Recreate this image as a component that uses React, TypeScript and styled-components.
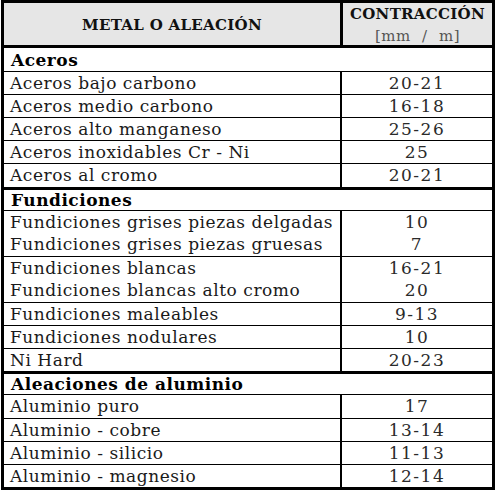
import styled, { createGlobalStyle } from "styled-components";

const LINE = 23.1;

type Item = {
  names: string[];
  values: string[];
};

type Section = {
  title: string;
  items: Item[];
};

const sections: Section[] = [
  {
    title: "Aceros",
    items: [
      { names: ["Aceros bajo carbono"], values: ["20-21"] },
      { names: ["Aceros medio carbono"], values: ["16-18"] },
      { names: ["Aceros alto manganeso"], values: ["25-26"] },
      { names: ["Aceros inoxidables Cr - Ni"], values: ["25"] },
      { names: ["Aceros al cromo"], values: ["20-21"] },
    ],
  },
  {
    title: "Fundiciones",
    items: [
      {
        names: [
          "Fundiciones grises piezas delgadas",
          "Fundiciones grises piezas gruesas",
        ],
        values: ["10", "7"],
      },
      {
        names: ["Fundiciones blancas", "Fundiciones blancas alto cromo"],
        values: ["16-21", "20"],
      },
      { names: ["Fundiciones maleables"], values: ["9-13"] },
      { names: ["Fundiciones nodulares"], values: ["10"] },
      { names: ["Ni Hard"], values: ["20-23"] },
    ],
  },
  {
    title: "Aleaciones de aluminio",
    items: [
      { names: ["Aluminio puro"], values: ["17"] },
      { names: ["Aluminio - cobre"], values: ["13-14"] },
      { names: ["Aluminio - silicio"], values: ["11-13"] },
      { names: ["Aluminio - magnesio"], values: ["12-14"] },
    ],
  },
];

const GlobalStyle = createGlobalStyle`
  html, body {
    margin: 0;
    padding: 0;
    background: #ffffff;
  }
  body {
    font-family: "DejaVu Serif", "Liberation Serif", serif;
    color: #1a1a1a;
  }
`;

const Table = styled.div`
  box-sizing: border-box;
  width: 494px;
  height: 490px;
  margin-left: 1px;
  border: 3px solid #000;
  display: flex;
  flex-direction: column;
  overflow: hidden;
`;

const HeadRow = styled.div`
  box-sizing: border-box;
  display: grid;
  grid-template-columns: 336px 1fr;
  height: 45px;
  background: #e6e6e6;
  border-bottom: 3px solid #000;
`;

const HeadCell = styled.div<{ $divider?: boolean }>`
  display: flex;
  flex-direction: column;
  align-items: center;
  justify-content: center;
  border-left: ${(p) => (p.$divider ? "3px solid #000" : "none")};
  font-size: 15px;
  font-weight: bold;
  letter-spacing: 0.3px;
  line-height: 22px;
  color: #111;
`;

const Unit = styled.span`
  font-weight: normal;
  font-size: 15px;
  letter-spacing: 0.5px;
  color: #555;
  word-spacing: 6px;
`;

const SectionTitle = styled.div<{ $thick?: boolean }>`
  box-sizing: border-box;
  height: ${LINE}px;
  border-top: ${(p) => (p.$thick ? "3px solid #000" : "none")};
  padding-left: 7px;
  font-size: 17px;
  font-weight: bold;
  letter-spacing: 0.5px;
  display: flex;
  align-items: center;
  color: #000;
`;

const Row = styled.div<{ $lines: number }>`
  box-sizing: border-box;
  display: grid;
  grid-template-columns: 336px 1fr;
  height: ${(p) => p.$lines * LINE}px;
  border-top: 1px solid #000;
`;

const NameCell = styled.div`
  display: flex;
  flex-direction: column;
  justify-content: center;
  padding-left: 6px;
  font-size: 17px;
  letter-spacing: 0.55px;
  line-height: ${LINE - 0.5}px;
  white-space: nowrap;
`;

const ValueCell = styled.div`
  display: flex;
  flex-direction: column;
  align-items: center;
  justify-content: center;
  border-left: 2px solid #000;
  font-size: 17px;
  letter-spacing: 1.5px;
  line-height: ${LINE - 0.5}px;
  color: #2a2a2a;
`;

export default function App() {
  return (
    <>
      <GlobalStyle />
      <Table>
        <HeadRow>
          <HeadCell>METAL O ALEACIÓN</HeadCell>
          <HeadCell $divider>
            <span>CONTRACCIÓN</span>
            <Unit>[mm / m]</Unit>
          </HeadCell>
        </HeadRow>
        {sections.map((section, i) => (
          <div key={section.title}>
            <SectionTitle $thick={i > 0}>{section.title}</SectionTitle>
            {section.items.map((item) => (
              <Row key={item.names[0]} $lines={item.names.length}>
                <NameCell>
                  {item.names.map((n) => (
                    <span key={n}>{n}</span>
                  ))}
                </NameCell>
                <ValueCell>
                  {item.values.map((v, k) => (
                    <span key={k}>{v}</span>
                  ))}
                </ValueCell>
              </Row>
            ))}
          </div>
        ))}
      </Table>
    </>
  );
}
